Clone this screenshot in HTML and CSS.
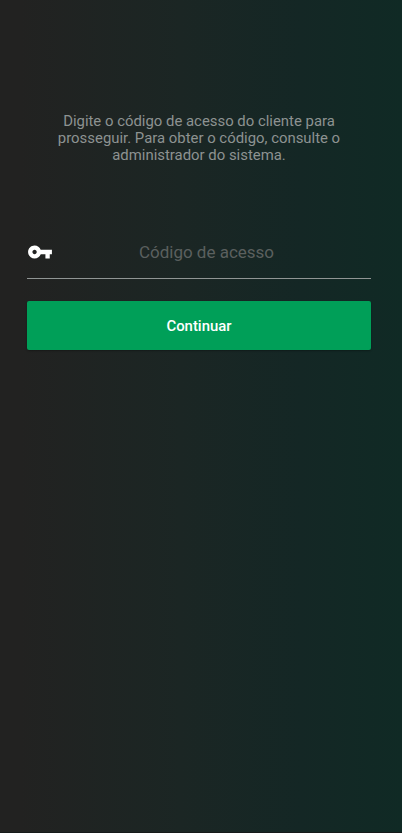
FILE: index.html
```html
<!DOCTYPE html>
<html lang="pt-BR">
<head>
    <meta charset="UTF-8">
    <meta name="viewport" content="width=device-width, initial-scale=1.0">
    <title>Código de acesso</title>
    <link rel="stylesheet" href="styles.css">
</head>
<body>

    <form class="access-form">
        <p class="intro">Digite o código de acesso do cliente para prosseguir. Para obter o código, consulte o administrador do sistema.</p>

        <div class="field">
            <svg class="key-icon" viewBox="0 0 24 24" aria-hidden="true">
                <path d="M12.65 10C11.83 7.67 9.61 6 7 6c-3.31 0-6 2.69-6 6s2.69 6 6 6c2.61 0 4.83-1.67 5.65-4H17v4h4v-4h2v-4H12.65zM7 14c-1.1 0-2-.9-2-2s.9-2 2-2 2 .9 2 2-.9 2-2 2z"/>
            </svg>
            <input type="text" id="code" name="code" placeholder="Código de acesso" aria-label="Código de acesso">
        </div>

        <button type="submit">Continuar</button>
    </form>

</body>
</html>
```
FILE: styles.css
```css
body {
    font-family: Roboto, sans-serif;
    background: linear-gradient(to right, #222221 5%, #1b2624 45%, #142725 75%, #102a25);
    min-height: 100vh;
    margin: 0;
    box-sizing: border-box;
    border-bottom: 1px solid #161a1a;
}

.access-form {
    padding: 113px 31px 0 27px;
}

.intro {
    margin: 0 20px;
    color: #8d9291;
    font-size: 14.9px;
    line-height: 17px;
    text-align: center;
}

.field {
    display: flex;
    align-items: center;
    height: 50px;
    margin-top: 64px;
    border-bottom: 1px solid #909594;
}

.key-icon {
    width: 26px;
    height: 26px;
    margin-bottom: 2px;
    fill: #fff;
}

input[type="text"] {
    flex: 1;
    min-width: 0;
    padding: 0 11px 3px 0;
    border: none;
    outline: none;
    background: transparent;
    color: #fff;
    font-family: inherit;
    font-size: 17px;
    text-align: center;
}

input::placeholder {
    color: #5b605f;
}

button {
    display: block;
    width: 100%;
    height: 49px;
    margin-top: 22px;
    border: none;
    border-radius: 2px;
    background-color: #009f58;
    color: #fff;
    font-family: inherit;
    font-size: 14.9px;
    font-weight: 500;
    box-shadow: 0 1px 2px rgba(0, 0, 0, 0.3);
    cursor: pointer;
}
```
